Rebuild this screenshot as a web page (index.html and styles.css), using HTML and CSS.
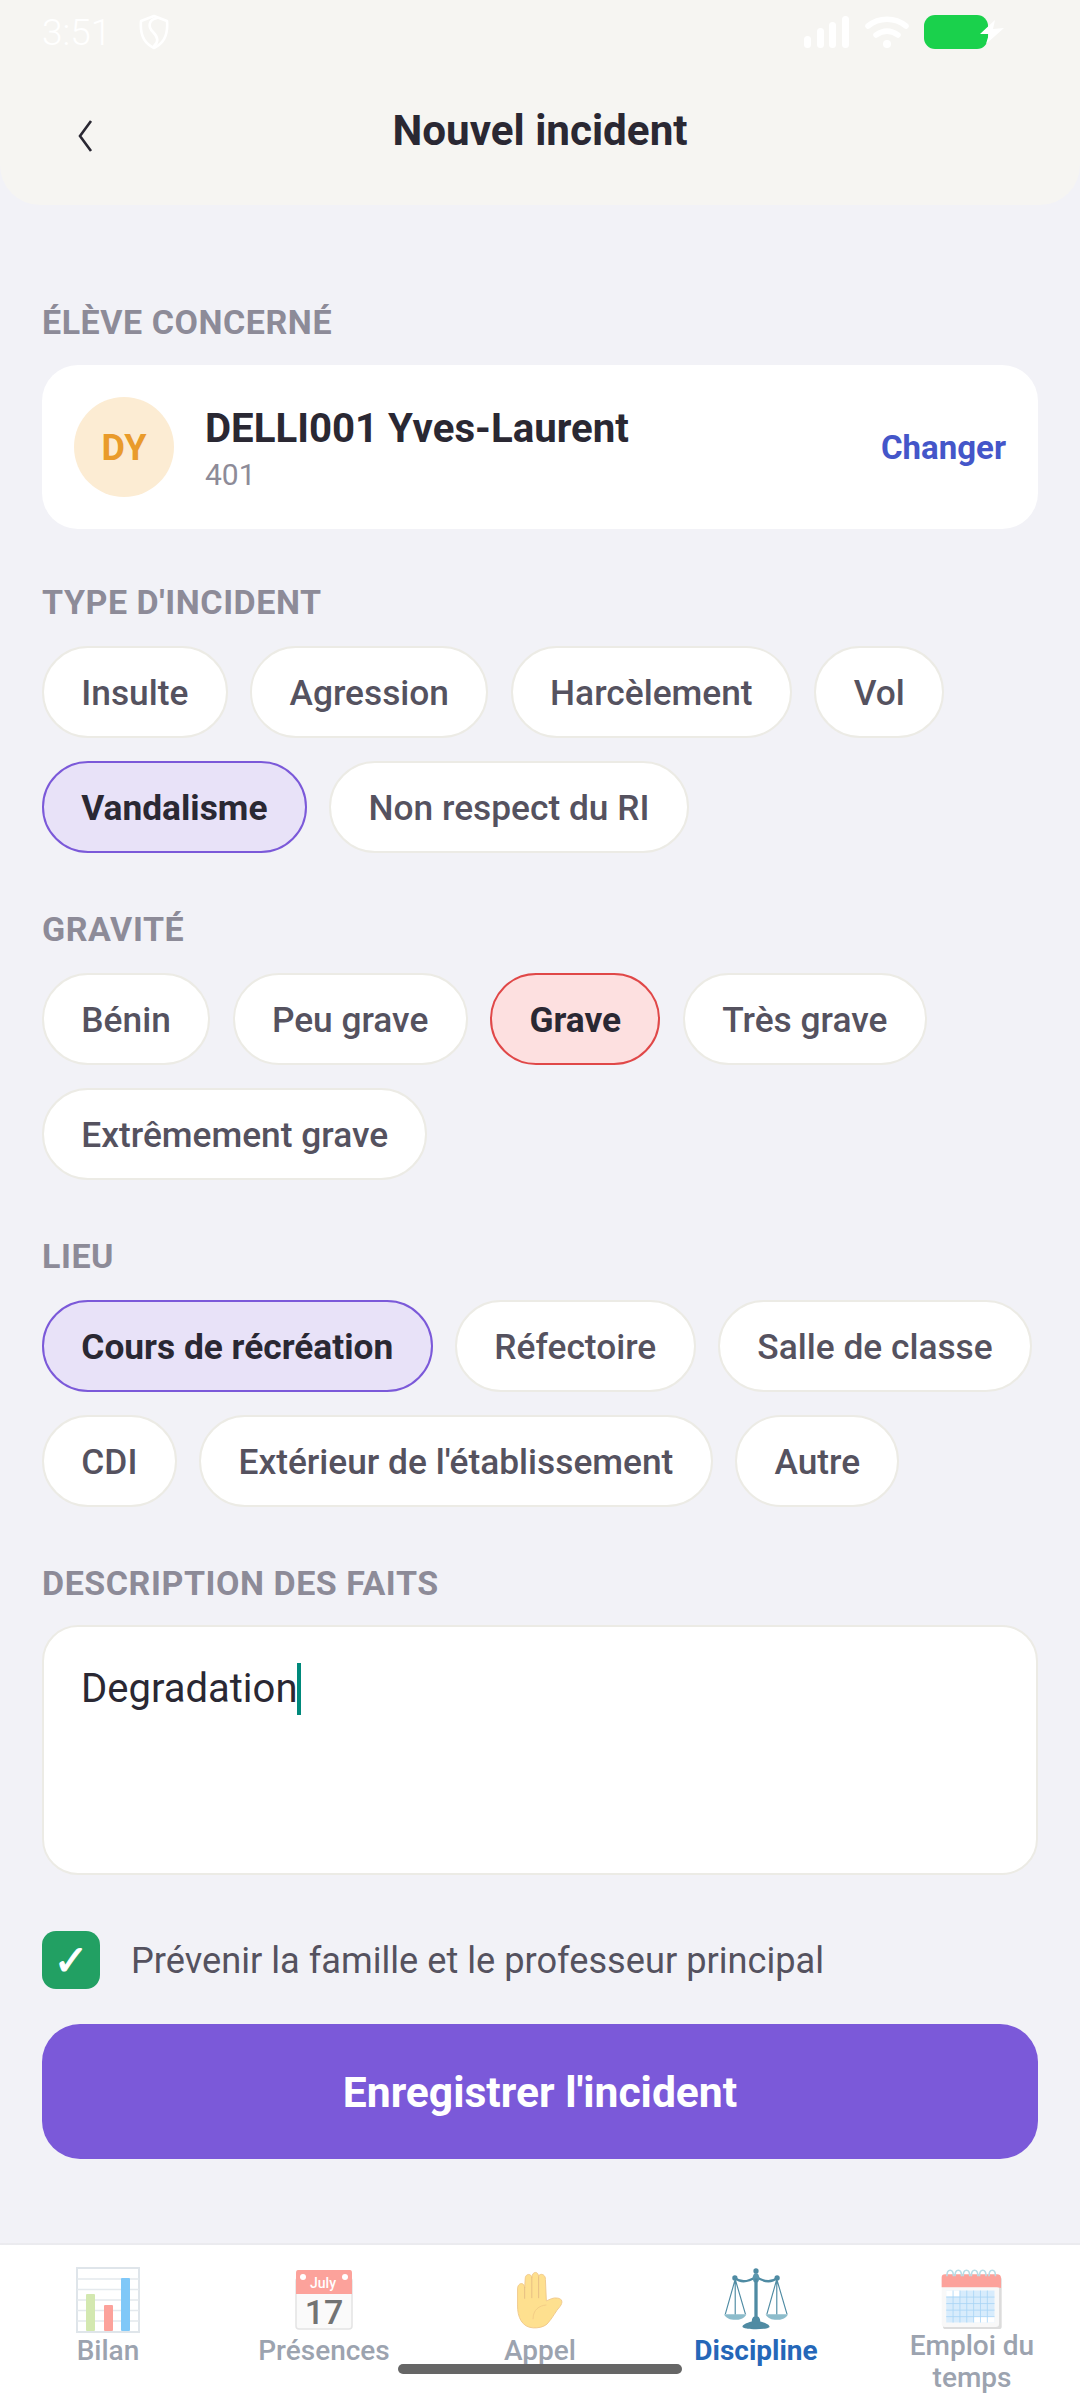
FILE: index.html
```html
<!DOCTYPE html>
<html lang="fr">
<head>
    <meta charset="UTF-8">
    <meta name="viewport" content="width=device-width, initial-scale=1.0">
    <title>Nouvel incident</title>
    <link rel="stylesheet" href="styles.css">
</head>
<body>
    <header class="header">
        <div class="status-bar">
            <div class="status-left">
                <span class="clock">3:51</span>
                <svg class="shield" viewBox="0 0 30 36" fill="none" stroke="#fff" stroke-width="2.6" stroke-linecap="round" stroke-linejoin="round">
                    <path d="M15 2 L28 7 C29 18 26 29 15 34 C4 29 1 18 2 7 Z"/>
                    <path d="M18 4 C9 6 9 13 14 18 C19 23 20 28 15 32"/>
                </svg>
            </div>
            <div class="status-right">
                <svg class="signal" viewBox="0 0 46 32" fill="#fff">
                    <rect x="0" y="20" width="7" height="12" rx="3.5"/>
                    <rect x="13" y="12" width="7" height="20" rx="3.5"/>
                    <rect x="25" y="6" width="7" height="26" rx="3.5"/>
                    <rect x="38" y="0" width="7" height="32" rx="3.5"/>
                </svg>
                <svg class="wifi" viewBox="0 0 44 32" fill="none" stroke="#fff" stroke-width="5.5" stroke-linecap="round">
                    <path d="M3 10 C14 1 30 1 41 10"/>
                    <path d="M11 19 C18 14 26 14 33 19"/>
                    <circle cx="22" cy="28" r="4" fill="#fff" stroke="none"/>
                </svg>
                <div class="battery">
                    <svg class="bolt" viewBox="0 0 24 24" fill="#fff"><path d="M15 0 L0 14 L9 14 L6 24 L24 8 L13 9 Z"/></svg>
                </div>
            </div>
        </div>
        <div class="title-row">
            <svg class="back" viewBox="0 0 16 32" fill="none" stroke="#2a2833" stroke-width="2.6" stroke-linejoin="miter"><path d="M14 1 L3 16 L14 31"/></svg>
            <h1>Nouvel incident</h1>
        </div>
    </header>

    <main class="form">
        <section class="student-section">
            <div class="section-label">ÉLÈVE CONCERNÉ</div>
            <div class="student-card">
                <div class="avatar">DY</div>
                <div class="student-info">
                    <div class="student-name">DELLI001 Yves-Laurent</div>
                    <div class="student-class">401</div>
                </div>
                <div class="change-link">Changer</div>
            </div>
        </section>

        <section class="field">
            <div class="section-label">TYPE D'INCIDENT</div>
            <div class="chips">
                <div class="chip">Insulte</div>
                <div class="chip">Agression</div>
                <div class="chip">Harcèlement</div>
                <div class="chip">Vol</div>
                <div class="chip chip-selected">Vandalisme</div>
                <div class="chip">Non respect du RI</div>
            </div>
        </section>

        <section class="field">
            <div class="section-label">GRAVITÉ</div>
            <div class="chips">
                <div class="chip">Bénin</div>
                <div class="chip">Peu grave</div>
                <div class="chip chip-danger">Grave</div>
                <div class="chip">Très grave</div>
                <div class="chip">Extrêmement grave</div>
            </div>
        </section>

        <section class="field">
            <div class="section-label">LIEU</div>
            <div class="chips">
                <div class="chip chip-selected">Cours de récréation</div>
                <div class="chip">Réfectoire</div>
                <div class="chip">Salle de classe</div>
                <div class="chip">CDI</div>
                <div class="chip">Extérieur de l'établissement</div>
                <div class="chip">Autre</div>
            </div>
        </section>

        <section class="field">
            <div class="section-label">DESCRIPTION DES FAITS</div>
            <div class="description"><span class="description-text">Degradation</span><span class="caret"></span></div>
        </section>

        <div class="notify-row">
            <span class="checkbox">✓</span>
            <span class="notify-text">Prévenir la famille et le professeur principal</span>
        </div>

        <button class="submit">Enregistrer l'incident</button>
    </main>

    <nav class="tabbar">
        <div class="tab">
            <svg class="tab-icon" width="64" height="66" viewBox="0 0 64 66">
                <rect x="1" y="1" width="62" height="64" fill="#fff" stroke="#dfe5ea" stroke-width="2"/>
                <path d="M1 12 H63 M1 22.500 H63 M1 33 H63 M1 43.500 H63 M1 54 H63" stroke="#e4e9ed" stroke-width="1.500"/>
                <rect x="10" y="27" width="9" height="37" rx="1" fill="#d3e8b0"/>
                <rect x="28" y="38" width="9" height="26" rx="1" fill="#fca29b"/>
                <rect x="45" y="11" width="9" height="53" rx="1" fill="#80c8f8"/>
            </svg>
            <span class="tab-label">Bilan</span>
        </div>
        <div class="tab">
            <svg class="tab-icon" width="58" height="60" viewBox="0 0 58 60">
                <rect x="1" y="8" width="56" height="51" rx="3" fill="#fafafa" stroke="#e4e4e4" stroke-width="1.500"/>
                <path d="M3 0 H55 Q57 0 57 3 V24 H1 V3 Q1 0 3 0 Z" fill="#fca29b"/>
                <circle cx="8" cy="7" r="3" fill="#fff"/>
                <circle cx="50" cy="7" r="3" fill="#fff"/>
                <text class="cal-month" x="28" y="18" text-anchor="middle">July</text>
                <text class="cal-day" x="29" y="54" text-anchor="middle">17</text>
            </svg>
            <span class="tab-label">Présences</span>
        </div>
        <div class="tab">
            <svg class="tab-icon" width="48" height="62" viewBox="80 38 155 192">
                <path d="M135 224 C100 222 84 190 85 150 L85 98 C85 78 107 74 108 95 L110 62 C112 48 130 48 131 62 C132 40 152 40 153 58 C156 46 176 50 175 68 L178 137 C190 132 200 125 215 128 C230 130 232 142 222 155 C208 170 200 190 180 212 C168 222 150 225 135 224 Z" fill="#fee08f" stroke="#f0c88a" stroke-width="3"/>
                <path d="M108 92 V130 M131 60 V128 M153 58 V128" stroke="#e5bd84" stroke-width="3" fill="none"/>
                <path d="M135 196 C135 165 155 152 178 150" stroke="#f2cb85" stroke-width="3" fill="none"/>
            </svg>
            <span class="tab-label">Appel</span>
        </div>
        <div class="tab">
            <svg class="tab-icon" width="64" height="64" viewBox="698 40 194 190">
                <g fill="none" stroke="#4f8ba3" stroke-width="3.500">
                    <path d="M732 72 L702 178 M732 72 L732 180 M732 72 L763 178"/>
                    <path d="M858 72 L828 178 M858 72 L858 180 M858 72 L889 178"/>
                </g>
                <path d="M730 68 C750 84 775 78 795 64 C815 78 840 84 860 68" fill="none" stroke="#4f8ba3" stroke-width="7"/>
                <circle cx="731" cy="68" r="8" fill="#4f8ba3"/>
                <circle cx="859" cy="68" r="8" fill="#4f8ba3"/>
                <circle cx="795" cy="47" r="8" fill="#4f8ba3"/>
                <ellipse cx="795" cy="68" rx="10" ry="15" fill="#5c97ae"/>
                <rect x="790" y="70" width="10" height="115" fill="#4f8ba3"/>
                <path d="M698 178 H766 C760 192 745 195 732 195 C716 195 704 190 698 178 Z" fill="#8dbccb"/>
                <path d="M824 178 H892 C886 192 871 195 858 195 C842 195 830 190 824 178 Z" fill="#8dbccb"/>
                <path d="M782 200 C782 178 808 178 808 200 C825 205 836 210 836 216 C836 226 754 226 754 216 C754 210 765 205 782 200 Z" fill="#4f8ba3"/>
            </svg>
            <span class="tab-label tab-label-active">Discipline</span>
        </div>
        <div class="tab">
            <svg class="tab-icon" width="62" height="62" viewBox="60 36 190 190">
                <rect x="66" y="60" width="180" height="160" rx="8" fill="#dcdcdc"/>
                <rect x="62" y="60" width="176" height="154" rx="10" fill="#f8f8f8"/>
                <path d="M72 52 H232 Q244 52 244 64 V94 L232 92 H62 V62 Q62 52 72 52 Z" fill="#fca29b"/>
                <rect x="76" y="102" width="148" height="98" fill="#d8ecfc"/>
                <rect x="76" y="102" width="42" height="18" fill="#fff"/>
                <rect x="160" y="182" width="64" height="18" fill="#fff"/>
                <path d="M97 102 V200 M118 102 V200 M139 102 V200 M160 102 V200 M181 102 V200 M202 102 V200 M76 122 H224 M76 142 H224 M76 162 H224 M76 182 H224" stroke="#a8d4f5" stroke-width="2.500" fill="none"/>
                <path d="M78 58 C78 34 98 34 98 58 M103 58 C103 34 123 34 123 58 M128 58 C128 34 148 34 148 58 M153 58 C153 34 173 34 173 58 M178 58 C178 34 198 34 198 58 M207 58 C207 34 227 34 227 58" stroke="#b8dde6" stroke-width="5" fill="none"/>
            </svg>
            <span class="tab-label tab-label-wrap">Emploi du temps</span>
        </div>
        <div class="home-indicator"></div>
    </nav>
</body>
</html>
```

FILE: styles.css
```css
* {
    box-sizing: border-box;
}
body {
    margin: 0;
    width: 1080px;
    height: 2400px;
    display: flex;
    flex-direction: column;
    overflow: hidden;
    background-color: #f2f2f7;
    color: #2a2833;
    font-family: Roboto, sans-serif;
}

/* header */
.header {
    flex: none;
    height: 205px;
    padding: 14px 42px 0;
    background-color: #f6f5f2;
    border-radius: 0 0 40px 40px;
}
.status-bar {
    display: flex;
    justify-content: space-between;
    align-items: center;
    height: 36px;
}
.status-left {
    display: flex;
    align-items: center;
    gap: 28px;
}
.clock {
    font-size: 37px;
    font-weight: 300;
    color: #fff;
}
.shield {
    width: 30px;
    height: 36px;
}
.status-right {
    display: flex;
    align-items: center;
    margin-right: 34px;
}
.signal {
    width: 46px;
    height: 32px;
    margin-right: 15px;
}
.wifi {
    width: 44px;
    height: 32px;
    margin-right: 15px;
}
.battery {
    position: relative;
    width: 64px;
    height: 34px;
    margin-right: 16px;
    border-radius: 11px;
    background-color: #1ad14c;
}
.bolt {
    position: absolute;
    left: 56px;
    top: 5px;
    width: 24px;
    height: 24px;
}
.title-row {
    position: relative;
    display: flex;
    justify-content: center;
    align-items: center;
    height: 60px;
    margin-top: 50px;
}
.back {
    position: absolute;
    left: 35px;
    top: 20px;
    width: 16px;
    height: 32px;
}
h1 {
    margin: 0;
    font-size: 42.2px;
    font-weight: 700;
}

/* form */
.form {
    flex: none;
    padding: 99px 42px 0;
}
.section-label {
    height: 36px;
    line-height: 36px;
    font-size: 34px;
    font-weight: 700;
    letter-spacing: 0.55px;
    color: #8d8b98;
}
.student-card {
    display: flex;
    align-items: center;
    height: 164px;
    margin-top: 25px;
    padding: 0 32px;
    background: #fff;
    border-radius: 36px;
}
.avatar {
    display: flex;
    justify-content: center;
    align-items: center;
    width: 100px;
    height: 100px;
    padding-top: 2px;
    margin-right: 31px;
    border-radius: 50%;
    background-color: #fcecd3;
    color: #e99b2b;
    font-size: 36px;
    font-weight: 700;
}
.student-info {
    flex: 1;
    padding-top: 5px;
}
.student-name {
    font-size: 40.2px;
    font-weight: 700;
    line-height: 44px;
}
.student-class {
    margin-top: 6px;
    font-size: 30px;
    line-height: 36px;
    color: #8d8b98;
}
.change-link {
    font-size: 33px;
    font-weight: 700;
    color: #4456c9;
}
.field {
    margin-top: 58px;
}
.student-section + .field {
    margin-top: 55px;
}
.chips {
    display: flex;
    flex-wrap: wrap;
    gap: 23px 22.5px;
    margin-top: 26px;
}
.chip {
    display: flex;
    align-items: center;
    height: 92px;
    padding: 2px 37.3px 0;
    background: #fff;
    border: 2px solid #ecebe5;
    border-radius: 46px;
    font-size: 35.3px;
    font-weight: 500;
    color: #55525f;
}
.chip-selected {
    background-color: #e8e2f8;
    border-color: #7b59d9;
    font-weight: 700;
    color: #2a2833;
}
.chip-danger {
    background-color: #fde0e0;
    border-color: #e04848;
    font-weight: 700;
    color: #2a2833;
}
.description {
    display: flex;
    align-items: flex-start;
    height: 250px;
    margin-top: 24px;
    padding: 39px 37px;
    background: #fff;
    border: 2px solid #ecebe5;
    border-radius: 36px;
}
.description-text {
    font-size: 40px;
    line-height: 46px;
}
.caret {
    width: 4px;
    height: 52px;
    margin-top: -3px;
    background-color: #00897b;
}
.notify-row {
    display: flex;
    align-items: center;
    margin-top: 56px;
}
.checkbox {
    display: flex;
    justify-content: center;
    align-items: center;
    width: 58px;
    height: 58px;
    margin-right: 31px;
    border-radius: 14px;
    background-color: #22a063;
    color: #fff;
    font-family: "DejaVu Sans", sans-serif;
    font-size: 42px;
    font-weight: 700;
    -webkit-text-stroke: 1px #fff;
}
.notify-text {
    font-size: 36.2px;
    color: #55525f;
}
.submit {
    display: block;
    width: 100%;
    height: 135px;
    margin-top: 35px;
    border: none;
    border-radius: 38px;
    background-color: #7b59d9;
    color: #fff;
    font-family: Roboto, sans-serif;
    font-size: 42.6px;
    font-weight: 700;
}

/* bottom nav */
.tabbar {
    position: relative;
    flex: none;
    display: flex;
    height: 157px;
    margin-top: auto;
    padding-top: 22px;
    background: #fff;
    border-top: 2px solid #ebebef;
}
.tab {
    display: flex;
    flex-direction: column;
    align-items: center;
    width: 216px;
}
.tab-icon {
    display: block;
    height: 66px;
}
.tab-label {
    width: 150px;
    margin-top: 2px;
    font-size: 28px;
    font-weight: 500;
    line-height: 32px;
    text-align: center;
    color: #9ca3af;
}
.tab-label-active {
    font-weight: 700;
    color: #2567b8;
}
.tab-label-wrap {
    margin-top: -3px;
}
.cal-month {
    font-family: Roboto, sans-serif;
    font-size: 14px;
    font-weight: 500;
    fill: #fff;
}
.cal-day {
    font-family: Roboto, sans-serif;
    font-size: 34px;
    font-weight: 500;
    fill: #737373;
}
.home-indicator {
    position: absolute;
    left: 398px;
    bottom: 26px;
    width: 284px;
    height: 10px;
    border-radius: 5px;
    background-color: #666;
}
```
